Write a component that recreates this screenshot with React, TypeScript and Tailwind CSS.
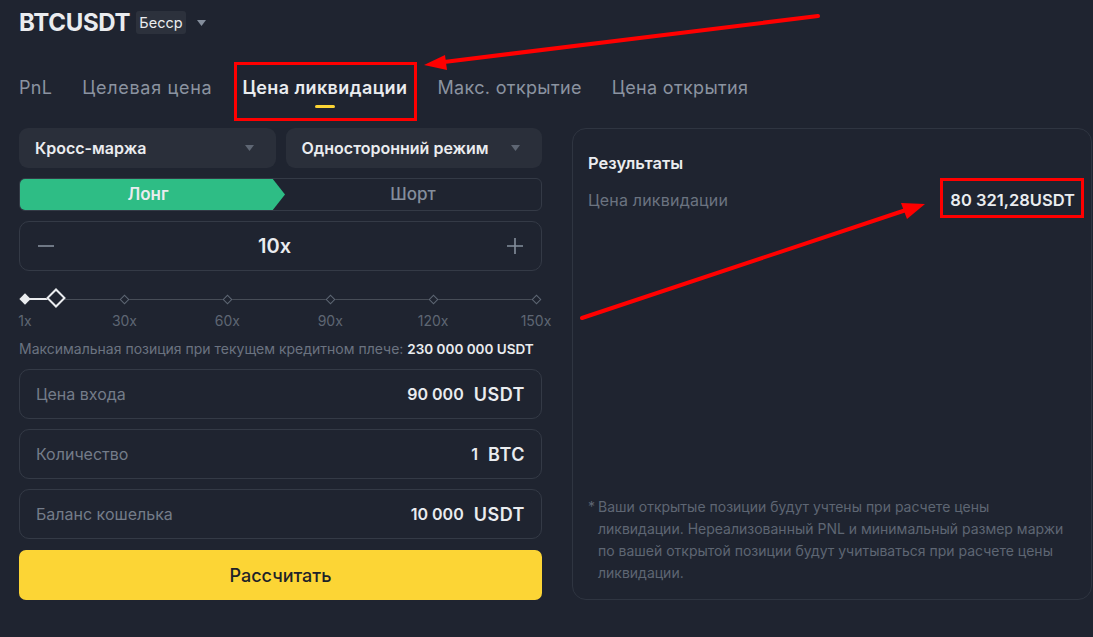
import React from 'react';

const marks = [
  { label: '1x', value: 1 },
  { label: '30x', value: 30 },
  { label: '60x', value: 60 },
  { label: '90x', value: 90 },
  { label: '120x', value: 120 },
  { label: '150x', value: 150 },
];

const leverage = 10;
const pos = (v: number) => ((v - 1) / 149) * 100;

function Caret({ className = '' }: { className?: string }) {
  return (
    <svg width="9" height="6" viewBox="0 0 9 6" className={className}>
      <path d="M0 0h9L4.5 6z" fill="currentColor" />
    </svg>
  );
}

function Field({ label, value, unit }: { label: string; value: string; unit: string }) {
  return (
    <div className="h-[50px] rounded-[10px] border border-[#343a46] flex items-center justify-between pl-[16px] pr-[16px]">
      <span className="text-[16px] text-[#747c89]">{label}</span>
      <span className="flex items-center gap-[10px] text-[#eaecef] font-semibold">
        <span className="text-[16px]">{value}</span>
        <span className="text-[18px] tracking-[0.5px]">{unit}</span>
      </span>
    </div>
  );
}

export default function App() {
  const tabs = ['PnL', 'Целевая цена', 'Цена ликвидации', 'Макс. открытие', 'Цена открытия'];

  return (
    <div className="relative w-[1093px] h-[637px] overflow-hidden bg-[#1f2430] text-[#eaecef] font-['Inter','Noto_Sans',sans-serif]">
      <div className="pl-[19px] pr-[1px]">
        {/* header */}
        <div className="flex items-center h-[44px] pt-[1px]">
          <span className="text-[24px] font-bold tracking-[-0.3px]">BTCUSDT</span>
          <span className="ml-[6px] px-[3px] h-[23px] flex items-center rounded-[3px] bg-[#2c313c] text-[14.5px] text-[#eaecef]">Бесср</span>
          <Caret className="ml-[11px] text-[#848e9c]" />
        </div>

        {/* tabs */}
        <div className="flex gap-[30px] mt-[22px] h-[62px]">
          {tabs.map((t, i) => (
            <div key={t} className="relative pt-[8px]">
              <span
                className={
                  i === 2
                    ? 'text-[18px] tracking-[0.4px] font-semibold text-[#eaecef]'
                    : i === 1
                    ? 'text-[18px] tracking-[0.7px] text-[#8b93a0]'
                    : 'text-[18px] tracking-[0.35px] text-[#8b93a0]'
                }
              >
                {t}
              </span>
              {i === 2 && <div className="absolute left-1/2 -translate-x-1/2 top-[39px] w-[20px] h-[3px] rounded-full bg-[#fcd535]" />}
            </div>
          ))}
        </div>

        <div className="flex gap-[30px]">
          {/* left column */}
          <div className="w-[523px] flex flex-col">
            <div className="flex gap-[10px]">
              <div className="flex-1 h-[40px] rounded-[9px] bg-[#2a2f3a] flex items-center justify-between pl-[16px] pr-[22px]">
                <span className="text-[16px] font-semibold">Кросс-маржа</span>
                <Caret className="text-[#5e6673]" />
              </div>
              <div className="flex-1 h-[40px] rounded-[9px] bg-[#2a2f3a] flex items-center justify-between pl-[16px] pr-[22px]">
                <span className="text-[16px] font-semibold">Односторонний режим</span>
                <Caret className="text-[#5e6673]" />
              </div>
            </div>

            <div className="mt-[10px] h-[33px] rounded-[6px] border border-[#343a46] flex overflow-hidden">
              <div className="w-[266px] -ml-px -my-px bg-[#2ebd85] flex items-center justify-center pr-[8px] [clip-path:polygon(0_0,calc(100%-13px)_0,100%_50%,calc(100%-13px)_100%,0_100%)]">
                <span className="text-[17px] font-semibold text-[#eaecef]">Лонг</span>
              </div>
              <div className="flex-1 flex items-center justify-center">
                <span className="text-[17px] font-medium text-[#848e9c]">Шорт</span>
              </div>
            </div>

            <div className="mt-[10px] h-[50px] rounded-[10px] border border-[#343a46] flex items-center justify-between px-[17px]">
              <svg width="18" height="18" viewBox="0 0 18 18"><path d="M1 9h16" stroke="#848e9c" strokeWidth="1.6" /></svg>
              <span className="text-[20px] font-semibold pr-[12px]">10x</span>
              <svg width="18" height="18" viewBox="0 0 18 18"><path d="M1 9h16M9 1v16" stroke="#848e9c" strokeWidth="1.6" /></svg>
            </div>

            {/* slider */}
            <div className="mt-[21px] px-[6px]">
              <div className="relative h-[14px]">
                <div className="absolute left-0 right-0 top-[6.5px] h-px bg-[#474d57]" />
                <div className="absolute left-0 top-[6px] h-[2px] bg-[#eaecef]" style={{ width: `${pos(leverage)}%` }} />
                {marks.map((m) => (
                  <div
                    key={m.label}
                    className={
                      m.value <= leverage
                        ? 'absolute top-[3px] w-[8px] h-[8px] -ml-[4px] rotate-45 bg-[#eaecef]'
                        : 'absolute top-[3.5px] w-[7px] h-[7px] -ml-[3.5px] rotate-45 bg-[#1f2430] border border-[#5e6673]'
                    }
                    style={{ left: `${pos(m.value)}%` }}
                  />
                ))}
                <div
                  className="absolute top-[-1px] w-[14px] h-[14px] -ml-[7px] rotate-45 bg-[#1f2430] border-2 border-[#eaecef]"
                  style={{ left: `${pos(leverage)}%` }}
                />
              </div>
              <div className="relative h-[22px] mt-[2px]">
                {marks.map((m) => (
                  <span
                    key={m.label}
                    className="absolute top-[2px] -translate-x-1/2 text-[14px] text-[#5e6673]"
                    style={{ left: `${pos(m.value)}%` }}
                  >
                    {m.label}
                  </span>
                ))}
              </div>
            </div>

            <div className="mt-[8px] text-[14px] text-[#6b7380]">
              Максимальная позиция при текущем кредитном плече: <span className="text-[13.5px] font-semibold text-[#eaecef]">230 000 000 USDT</span>
            </div>

            <div className="mt-[10px] flex flex-col gap-[10px]">
              <Field label="Цена входа" value="90 000" unit="USDT" />
              <Field label="Количество" value="1" unit="BTC" />
              <Field label="Баланс кошелька" value="10 000" unit="USDT" />
            </div>

            <button className="mt-[11px] h-[50px] rounded-[7px] bg-[#fcd535] text-[18px] font-medium text-[#1e2329]">
              Рассчитать
            </button>
          </div>

          {/* results */}
          <div className="flex-1 h-[472px] rounded-[14px] border border-[#2f3541] flex flex-col px-[15px] pt-[22px] pb-[15px]">
            <div className="text-[16.5px] font-semibold">Результаты</div>
            <div className="mt-[12px] flex items-center justify-between">
              <span className="text-[16px] tracking-[0.2px] text-[#6b7380]">Цена ликвидации</span>
              <span className="text-[16.5px] font-semibold pr-[1px]">80 321,28USDT</span>
            </div>
            <div className="mt-auto flex text-[14px] leading-[22px] text-[#5e6673] whitespace-nowrap">
              <span className="w-[10px] shrink-0">*</span>
              <span>
                <span className="block">Ваши открытые позиции будут учтены при расчете цены</span>
                <span className="block">ликвидации. Нереализованный PNL и минимальный размер маржи</span>
                <span className="block">по вашей открытой позиции будут учитываться при расчете цены</span>
                <span className="block">ликвидации.</span>
              </span>
            </div>
          </div>
        </div>
      </div>

      {/* annotations */}
      <svg className="absolute inset-0 pointer-events-none" width="1093" height="637" viewBox="0 0 1093 637">
        <rect x="235.5" y="63.5" width="180" height="56" fill="none" stroke="#ff0000" strokeWidth="3" />
        <rect x="941.5" y="179.5" width="141" height="37" fill="none" stroke="#ff0000" strokeWidth="3" />
        <path d="M818 16L444 62" stroke="#ff0000" strokeWidth="4" strokeLinecap="round" />
        <path d="M424 65L445 55L447 70Z" fill="#ff0000" />
        <path d="M582 318L906 210" stroke="#ff0000" strokeWidth="4" strokeLinecap="round" />
        <path d="M925 204L901 203L907 219Z" fill="#ff0000" />
      </svg>
    </div>
  );
}
